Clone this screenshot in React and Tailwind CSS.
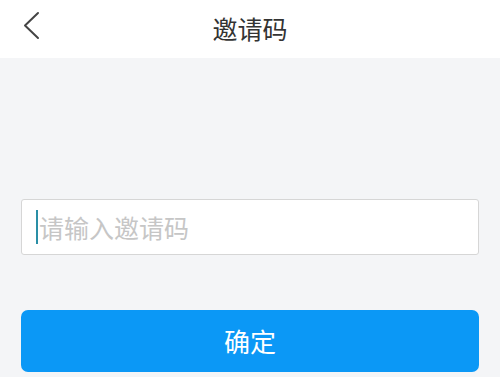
import React from "react";

function BackIcon() {
  return (
    <svg width="20" height="30" viewBox="0 0 20 30" fill="none">
      <path d="M16 2 L3 14.5 L16 27" stroke="#444" strokeWidth="2" strokeLinecap="round" strokeLinejoin="round" />
    </svg>
  );
}

export default function App() {
  return (
    <div
      className="w-[500px] h-[377px] bg-[#f4f5f7] overflow-hidden"
      style={{ fontFamily: '"Noto Sans CJK SC", "Noto Sans", sans-serif' }}
    >
      <header className="relative h-[58px] bg-white flex items-center justify-center">
        <button className="absolute left-[22px] top-[11px]">
          <BackIcon />
        </button>
        <h1 className="text-[25px] text-[#333] leading-none -mt-[2px]">邀请码</h1>
      </header>

      <div className="px-[21px] pt-[141px]">
        <div className="h-[56px] bg-white border border-[#d6d6d6] rounded-[3px] flex items-center pl-[14px]">
          <span className="w-[2px] h-[34px] bg-[#2a8fa6] mr-[1px]" />
          <span className="text-[25px] text-[#c6c6c6] leading-none">请输入邀请码</span>
        </div>

        <button className="mt-[55px] w-full h-[62px] bg-[#0b98f6] rounded-[7px] text-white text-[26px] leading-none flex items-center justify-center">
          确定
        </button>
      </div>
    </div>
  );
}
